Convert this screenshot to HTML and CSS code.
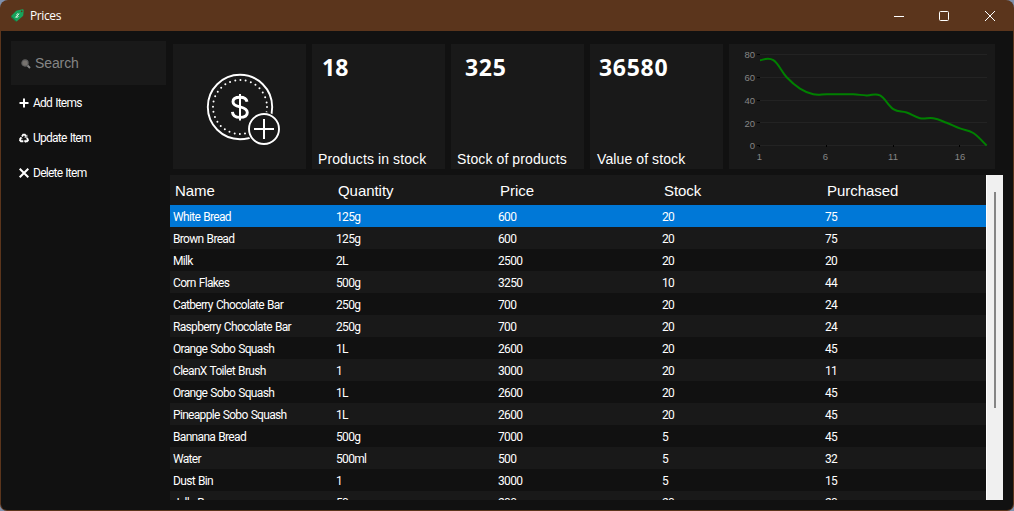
FILE: index.html
```html
<!DOCTYPE html>
<html lang="en">
<head>
<meta charset="utf-8">
<title>Prices</title>
<link rel="stylesheet" href="styles.css">
</head>
<body>
<div class="window">
  <header class="titlebar">
    <svg class="app-icon" width="13" height="13" viewBox="0 0 13 13"><path d="M6 1.400 11.500.3Q12.700.2 12.700 1.500L12.300 6.300Q12.200 6.900 11.700 7.300L6.200 12.100Q5.200 12.900 4.400 12.100L.6 8.400Q-.2 7.500.6 6.600L5 2Q5.400 1.500 6 1.400Z" fill="#17a35a"/><path d="M.4 7 5.800 12.400Q5 12.700 4.400 12.100L.6 8.400Q0 7.700.4 7Z" fill="#0d7c46"/><circle cx="10.700" cy="2.400" r=".8" fill="#5b351c"/><path d="M7.800 5.200Q6.300 4.300 5.800 5.400 5.600 6.400 6.600 6.700 7.600 7.300 6.600 8.200 5.600 8.700 4.800 7.800M8.200 4.700 4.400 8.500" fill="none" stroke="#e4f5eb" stroke-width=".9"/></svg>
    <span class="title">Prices</span>
    <svg class="controls" width="104" height="12" viewBox="0 0 104 12" fill="none" stroke="#fff"><path d="M0 6.500H10"/><rect x="45.500" y="1.500" width="9" height="9" rx="1"/><path d="M91 1 101 11M101 1 91 11"/></svg>
  </header>
  <div class="client">
    <aside class="sidebar">
      <div class="search">
        <svg width="10" height="10" viewBox="0 0 10 10"><path d="M6 6 9 9" stroke="#858585" stroke-width="2"/><circle cx="4" cy="4" r="3.100" fill="#77736f" stroke="#606060" stroke-width="1.200"/></svg>
        <span>Search</span>
      </div>
      <div class="action"><svg width="10" height="10" viewBox="0 0 10 10"><path d="M5 .5V9.500M.5 5H9.500" stroke="#fff" stroke-width="2"/></svg><span class="add">Add Items</span></div>
      <div class="action"><svg width="10" height="10" viewBox="0 0 10 10" fill="none" stroke="#fff" stroke-width="1.900"><path d="M3 3.500 4.200 1.600H5.800L7 3.500M8 4.800 9 7.200 8 8.300H5.800M4.300 8.300H2L1 7.200 2 4.700"/><path d="M7.900 1.800V4.300H5.500M6.500 6.800 5.200 8.200 6.500 9.600M.5 5.500 2 4.300 3.400 5.600" stroke-width=".8"/></svg><span class="update">Update Item</span></div>
      <div class="action"><svg width="10" height="10" viewBox="0 0 10 10"><path d="M.7.7 9.300 9.300M9.300.7.7 9.300" stroke="#fff" stroke-width="2"/></svg><span class="delete">Delete Item</span></div>
    </aside>
    <main class="content">
      <section class="cards">
        <div class="card coin">
          <svg width="133" height="125" viewBox="0 0 133 125" fill="none" stroke="#fff">
            <circle cx="67" cy="63" r="32.200" stroke-width="1.900"/>
            <circle cx="67" cy="63" r="27" stroke-width="2" stroke-linecap="round" stroke-dasharray="0 5.301"/>
            <circle cx="91" cy="85" r="17" fill="#191919" stroke="none"/>
            <circle cx="91" cy="85" r="15" stroke-width="1.900"/>
            <path d="M81 85H101M91 75V95" stroke-width="2"/>
            <path d="M67 50V76.500" stroke-width="2"/><path d="M74 57.800C73.500 54.600 70.700 53.200 67 53.200 62.500 53.200 60 55 60 57.700 60 60.700 62.700 61.900 67 62.800 71.600 63.800 74.300 65.200 74.300 68.500 74.300 71.800 71.400 73.400 67 73.400 62.500 73.400 59.700 71.500 59.400 67.900" stroke-width="2.900"/>
          </svg>
        </div>
        <div class="card stat products"><strong>18</strong><span>Products in stock</span></div>
        <div class="card stat stock"><strong>325</strong><span>Stock of products</span></div>
        <div class="card stat value"><strong>36580</strong><span>Value of stock</span></div>
        <div class="card chart">
          <svg width="266" height="125" viewBox="729 44 266 125">
            <path d="M760 54.500H987M760 77.500H987M760 100.500H987M760 122.500H987M760 145.500H987" stroke="#232323"/>
            <path d="M757 54.500H760M757 77.500H760M757 100.500H760M757 122.500H760M757 145.500H760M759.500 145V147M826.500 145V147M893.500 145V147M959.500 145V147" stroke="#000"/>
            <g class="axis y"><text x="755" y="58">80</text><text x="755" y="81">60</text><text x="755" y="104">40</text><text x="755" y="127">20</text><text x="755" y="149">0</text></g>
            <g class="axis x"><text x="759.500" y="160">1</text><text x="825.500" y="160">6</text><text x="893" y="160">11</text><text x="960" y="160">16</text></g>
            <path id="trend" fill="none" stroke="#008000" stroke-width="2"/>
          </svg>
        </div>
      </section>
      <section class="table-wrap">
        <div class="table">
          <div class="row head"><span>Name</span><span>Quantity</span><span>Price</span><span>Stock</span><span>Purchased</span></div>
          <div id="rows"></div>
        </div>
        <div class="scrollbar"><div class="thumb"></div></div>
      </section>
    </main>
  </div>
</div>
<script src="app.js"></script>
</body>
</html>
```
FILE: styles.css
```css
* { box-sizing: border-box; }
body { margin: 0; background: #7f91ad; overflow: hidden; font-family: "Liberation Sans", Arial, sans-serif; color: #fff; }
.window { width: 1014px; height: 511px; display: flex; flex-direction: column; background: #5b351c; border-radius: 8px 8px 7px 7px; overflow: hidden; }
.titlebar { height: 31px; flex: none; display: flex; align-items: center; padding: 0 17px 0 11px; }
.title { font: 12px/16px "Open Sans", sans-serif; margin-left: 6px; padding-top: 1px; letter-spacing: -.4px; }
.controls { margin-left: auto; margin-right: -1px; }
.client { flex: 1; min-height: 0; margin: 0 1px 1px; background: #111; border-radius: 0 0 6px 6px; display: flex; }
.sidebar { width: 169px; padding: 10px 4px 0 10px; flex: none; }
.search { height: 44px; width: 155px; background: #191919; color: #858585; display: flex; align-items: center; gap: 4px; padding-left: 10px; font-size: 14px; letter-spacing: -.1px; }
.search svg { margin-top: 1px; }
.action { height: 35px; display: flex; align-items: center; gap: 4px; padding-left: 8px; font: 12px Roboto, sans-serif; letter-spacing: -.75px; word-spacing: .8px; }
.content { width: 833px; flex: none; padding-top: 13px; }
.cards { height: 131px; display: flex; gap: 6px; padding-left: 3px; }
.card { width: 133px; height: 125px; background: #191919; flex: none; }
.card svg { display: block; }
.chart { width: 266px; }
.stat { display: flex; flex-direction: column; justify-content: space-between; padding: 8px 0 1px 6px; }
.stat strong { font: bold 23px/31px "Open Sans", sans-serif; padding-left: 4px; letter-spacing: .7px; }
.stat.products strong { letter-spacing: 0; }
.stat.stock strong { padding-left: 8px; }
.stat.value { padding-left: 7px; }
.stat.value strong { padding-left: 2px; }
.stat span { font-size: 14px; line-height: 17px; white-space: nowrap; letter-spacing: .1px; }
.axis { font-size: 9.5px; fill: #858585; }
.axis.y { text-anchor: end; }
.axis.x { text-anchor: middle; }
.table-wrap { display: flex; height: 325px; }
.table { width: 816px; overflow: hidden; }
.row { height: 22px; display: grid; grid-template-columns: 163px 162px 164px 163px 1fr; padding: 1px 0 0 3px; font: 12px/22px Roboto, sans-serif; letter-spacing: -.68px; word-spacing: .8px; white-space: nowrap; }
.row:nth-child(even) { background: #191919; }
.row.head { height: 30px; background: #191919; font: 15px/30px "Liberation Sans", sans-serif; padding: 1px 0 0 5px; letter-spacing: -.05px; word-spacing: 0; }
.row.selected { background: #0078d7; }
.scrollbar { width: 17px; background: #f0f0f0; border-left: 1px solid #fff; padding: 17px 0 0 7px; }
.thumb { width: 2px; height: 216px; background: #858585; }
```
FILE: app.js
```js
const items = [
  ["White Bread", "125g", 600, 20, 75],
  ["Brown Bread", "125g", 600, 20, 75],
  ["Milk", "2L", 2500, 20, 20],
  ["Corn Flakes", "500g", 3250, 10, 44],
  ["Catberry Chocolate Bar", "250g", 700, 20, 24],
  ["Raspberry Chocolate Bar", "250g", 700, 20, 24],
  ["Orange Sobo Squash", "1L", 2600, 20, 45],
  ["CleanX Toilet Brush", "1", 3000, 20, 11],
  ["Orange Sobo Squash", "1L", 2600, 20, 45],
  ["Pineapple Sobo Squash", "1L", 2600, 20, 45],
  ["Bannana Bread", "500g", 7000, 5, 45],
  ["Water", "500ml", 500, 5, 32],
  ["Dust Bin", "1", 3000, 5, 15],
  ["Jelly Beans", "50g", 200, 20, 20]
];
const rows = document.getElementById("rows");
items.forEach((item, index) => {
  const row = document.createElement("div");
  row.className = index === 0 ? "row selected" : "row";
  item.forEach(value => {
    const cell = document.createElement("span");
    cell.textContent = value;
    row.append(cell);
  });
  rows.append(row);
});

// Cardinal spline through the purchase values
const values = [75, 75, 60, 50, 45, 45, 45, 45, 44, 44, 32, 29, 24, 24, 20, 15, 11, 0];
const points = values.map((v, i) => [760 + i * 13.33, 145.5 - v * 1.1375]);
let d = "M" + points[0];
for (let i = 0; i < points.length - 1; i++) {
  const a = points[Math.max(i - 1, 0)], b = points[i], c = points[i + 1], e = points[Math.min(i + 2, points.length - 1)];
  const k = 0.2;
  d += `C${b[0] + (c[0] - a[0]) * k},${b[1] + (c[1] - a[1]) * k} ${c[0] - (e[0] - b[0]) * k},${c[1] - (e[1] - b[1]) * k} ${c[0]},${c[1]}`;
}
document.getElementById("trend").setAttribute("d", d);
```
